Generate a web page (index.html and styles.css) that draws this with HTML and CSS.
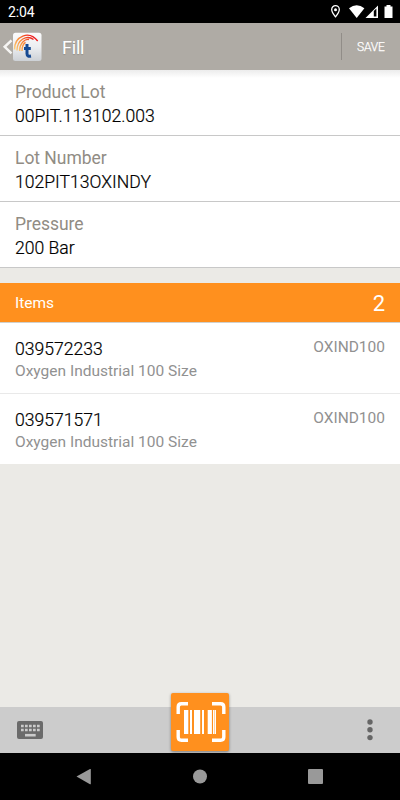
FILE: index.html
```html
<!DOCTYPE html>
<html lang="en">
<head>
<meta charset="utf-8">
<title>Fill</title>
<link rel="stylesheet" href="styles.css">
</head>
<body>
<div class="status">
  <span class="clock">2:04</span>
  <svg class="status-icons" width="66" height="23" viewBox="330 0 66 23">
    <path d="M335.500 5.700a3.800 3.800 0 0 0-3.800 3.800c0 2.800 3.800 7.300 3.800 7.300s3.800-4.500 3.800-7.300A3.800 3.800 0 0 0 335.500 5.700z" fill="none" stroke="#fff" stroke-width="1.300"/>
    <circle cx="335.500" cy="9.700" r="1.500" fill="#fff"/>
    <path d="M349 8.300Q356.700 2.300 364.400 8.300L356.700 18z" fill="#fff"/>
    <path d="M365.500 18L378 5.500V18z" fill="#fff"/>
    <path d="M373.800 11l2.600-2.600v8.200h-2.600z" fill="#000"/>
    <path d="M384.500 6.500h2V5h4v1.500h2V18h-8z" fill="#fff"/>
  </svg>
</div>
<header class="appbar">
  <svg class="logo" width="44" height="47" viewBox="0 23 44 47">
    <defs>
      <linearGradient id="tile" x2="0" y2="1"><stop offset="0" stop-color="#fbfbfc"/><stop offset=".5" stop-color="#eceef1"/><stop offset="1" stop-color="#cdd1d6"/></linearGradient>
      <linearGradient id="arc" gradientUnits="userSpaceOnUse" x1="14" y1="49" x2="30" y2="35"><stop offset="0" stop-color="#fdd27e"/><stop offset=".5" stop-color="#f98a35"/><stop offset="1" stop-color="#ee1c1c"/></linearGradient>
    </defs>
    <path d="M11.500 40.300L4.700 46.800l6.800 6.500" fill="none" stroke="#f6f5f3" stroke-width="2.500"/>
    <rect x="13" y="32.700" width="28.500" height="28.300" rx="2.500" fill="url(#tile)"/>
    <g fill="none" stroke="url(#arc)" stroke-width="1.400">
      <path d="M14.500 49.500C14.500 36 29 30 37.700 41"/>
      <path d="M17 50.500C17 39.500 27 34.500 33.500 39.500"/>
      <path d="M19.600 51C19.600 43 25 38.800 29 39.500"/>
      <path d="M22 51C22 46 23.500 43.500 25.500 42.300"/>
    </g>
    <path d="M27 44v9.800q0 3 4 2.200M24 48.500h6.800" fill="none" stroke="#174a92" stroke-width="3"/>
  </svg>
  <h1 class="title">Fill</h1>
  <span class="save">SAVE</span>
</header>
<main class="content">
  <section class="fields">
    <div class="field"><div class="label">Product Lot</div><div class="value">00PIT.113102.003</div></div>
    <div class="field"><div class="label">Lot Number</div><div class="value">102PIT13OXINDY</div></div>
    <div class="field"><div class="label">Pressure</div><div class="value">200 Bar</div></div>
  </section>
  <div class="items-head"><span>Items</span><span class="count">2</span></div>
  <section class="items">
    <div class="item"><div><div class="number">039572233</div><div class="desc">Oxygen Industrial 100 Size</div></div><span class="code">OXIND100</span></div>
    <div class="item"><div><div class="number">039571571</div><div class="desc">Oxygen Industrial 100 Size</div></div><span class="code">OXIND100</span></div>
  </section>
</main>
<footer class="toolbar">
  <svg width="26" height="18" viewBox="0 0 26 18">
    <rect width="26" height="18" rx="2" fill="#6b6b6b"/>
    <path d="M4 5h19M4 9h19" stroke="#ccc" stroke-width="2.600" stroke-dasharray="2.700 1.300"/>
    <path d="M8 14.200h10.700" stroke="#ccc" stroke-width="2.600"/>
  </svg>
  <svg width="6" height="22" viewBox="0 0 6 22" fill="#666"><circle cx="3" cy="3" r="2.700"/><circle cx="3" cy="10.800" r="2.700"/><circle cx="3" cy="18.600" r="2.700"/></svg>
  <div class="scan">
    <svg width="58" height="58" viewBox="171 693 58 58">
      <path d="M178.200 714v-7q0-3.200 3.200-3.200h6.600M212 703.800h8.600q3.200 0 3.200 3.200v7M223.800 730v7q0 3.200-3.200 3.200H212M188 740.200h-6.600q-3.200 0-3.200-3.200v-7" fill="none" stroke="#fff" stroke-width="3.400"/>
      <path d="M184 710h4.300v24H184zM190 710h2v24h-2zM194 710h6.200v24H194zM202 710h2v24h-2zM207.700 710h4.200v24h-4.200zM213 710h1.600v24H213zM215 710h1v24h-1z" fill="#fff"/>
    </svg>
  </div>
</footer>
<nav class="nav">
  <svg width="400" height="47" viewBox="0 753 400 47" fill="#999">
    <path d="M76.500 776.500L90 769q.8-.4.800.5v14.200q0 .9-.8.500z"/>
    <circle cx="200" cy="776.500" r="7"/>
    <rect x="308" y="769" width="15" height="15" rx="1"/>
  </svg>
</nav>
</body>
</html>
```
FILE: styles.css
```css
* { box-sizing: border-box; }
body {
  margin: 0;
  width: 400px;
  height: 800px;
  display: flex;
  flex-direction: column;
  overflow: hidden;
  font-family: Roboto, "Liberation Sans", sans-serif;
  background: #ebeae6;
}
svg { display: block; }
.status {
  height: 23px;
  flex: none;
  display: flex;
  justify-content: space-between;
  padding: 0 4px 0 8px;
  background: #000;
  color: #fff;
}
.clock { font-size: 14px; line-height: 24px; letter-spacing: -.1px; }
.appbar {
  height: 47px;
  flex: none;
  display: flex;
  align-items: center;
  background: #afaba5;
  color: #fff;
}
.title {
  margin: 2px 0 0 18px;
  font-size: 18px;
  font-weight: 400;
  line-height: 24px;
  letter-spacing: -.2px;
  text-shadow: 0 1px 1px rgba(0, 0, 0, .15);
}
.save {
  margin-left: auto;
  width: 59px;
  height: 27px;
  padding-left: 15px;
  border-left: 1px solid #918d88;
  font-size: 12px;
  font-weight: 300;
  letter-spacing: -.15px;
  line-height: 28px;
  -webkit-text-stroke: .25px #fff;
}
.content { flex: 1; }
.fields { background: linear-gradient(#ececec, #fff 8px); }
.field {
  height: 66px;
  padding: 11px 15px 0;
  border-bottom: 1px solid #c8c8c8;
}
.label { font-size: 17.500px; line-height: 23px; color: #918c84; letter-spacing: -.03px; }
.value,
.number {
  font-size: 17.600px;
  font-weight: 300;
  color: #000;
  -webkit-text-stroke: .2px #000;
}
.value { line-height: 24px; }
.items-head {
  height: 39px;
  margin-top: 15px;
  padding: 0 15px;
  display: flex;
  justify-content: space-between;
  align-items: center;
  background: #ff901e;
  color: #fff;
  font-size: 15.500px;
}
.count { font-size: 22px; padding-top: 1px; }
.items { background: #fff; border-top: 1px solid #d0d0cc; }
.item {
  height: 71px;
  padding: 14px 15px 0;
  display: flex;
  justify-content: space-between;
}
.item:first-child { height: 70px; }
.item + .item { border-top: 1px solid #e9e9e9; }
.number { line-height: 24px; margin-bottom: -1px; }
.desc { font-size: 15.500px; line-height: 22px; color: #919191; }
.code { font-size: 15.500px; line-height: 21px; color: #919191; }
.toolbar {
  position: relative;
  height: 46px;
  flex: none;
  display: flex;
  justify-content: space-between;
  align-items: center;
  padding: 0 27px 0 17px;
  background: #ccc;
}
.scan {
  position: absolute;
  left: 171px;
  top: -14px;
  width: 58px;
  height: 58px;
  border-radius: 2px;
  background: #ff901e;
  box-shadow: 0 1px 3px rgba(0, 0, 0, .4);
}
.nav { height: 47px; flex: none; background: #000; }
```
